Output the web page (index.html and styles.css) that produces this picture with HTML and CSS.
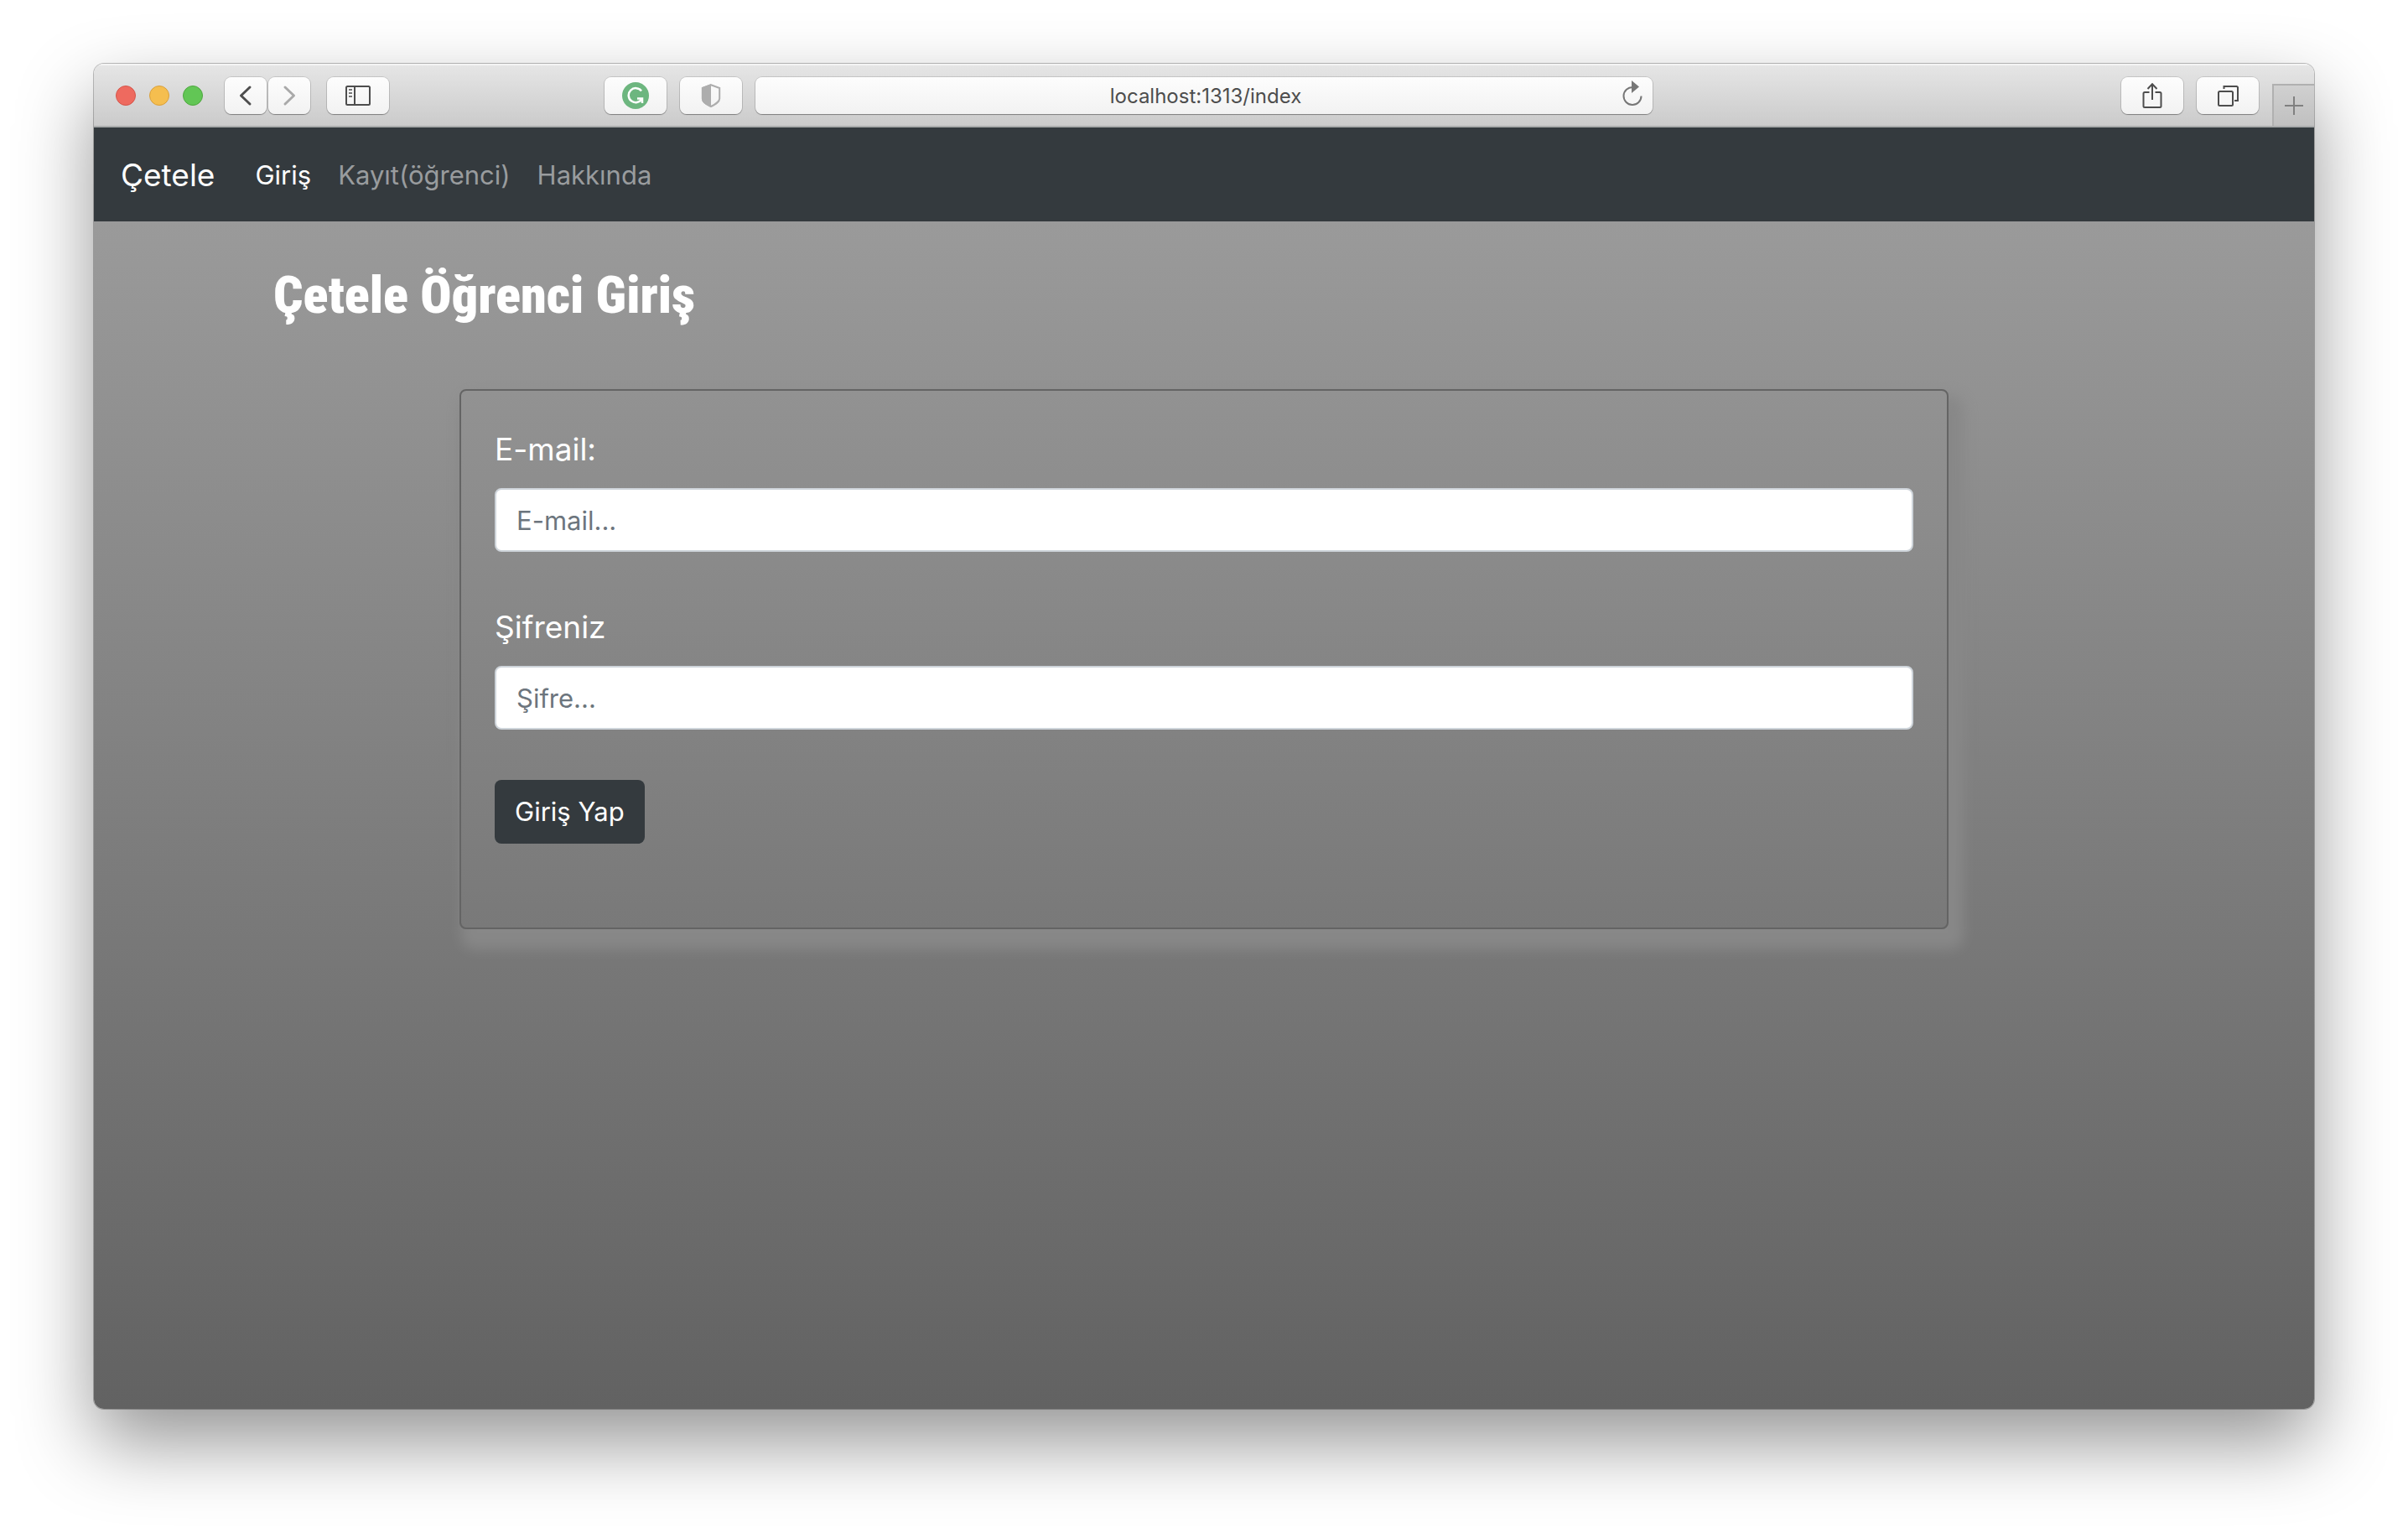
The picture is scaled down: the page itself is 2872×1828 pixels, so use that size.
FILE: index.html
```html
<!DOCTYPE html>
<html lang="tr">
<head>
<meta charset="utf-8">
<meta name="viewport" content="width=device-width, initial-scale=1">
<title>Çetele</title>
<link rel="stylesheet" href="styles.css">
</head>
<body>
<div class="window">
  <header class="toolbar">
    <div class="toolbar-side">
      <div class="lights"><span class="light light-red"></span><span class="light light-yellow"></span><span class="light light-green"></span></div>
      <div class="history">
        <button class="tool tool-small" type="button" aria-label="Geri"><svg width="50" height="44" viewBox="0 0 50 44"><path d="M30 12 19.500 22 30 32" fill="none" stroke="#4d4d4d" stroke-width="3" stroke-linecap="round" stroke-linejoin="round"/></svg></button>
        <button class="tool tool-small" type="button" aria-label="İleri"><svg width="50" height="44" viewBox="0 0 50 44"><path d="M20 12 30.500 22 20 32" fill="none" stroke="#a9a9a9" stroke-width="3" stroke-linecap="round" stroke-linejoin="round"/></svg></button>
      </div>
      <button class="tool" type="button" aria-label="Kenar çubuğu"><svg width="30" height="24" viewBox="0 0 30 24" fill="none" stroke="#4d4d4d" stroke-width="2"><rect x="1" y="1" width="28" height="22" rx="1.500"/><path d="M11 1v22"/><path d="M4 5h4M4 9h4M4 13h4" stroke="#777"/></svg></button>
      <button class="tool push" type="button" aria-label="Grammarly"><svg width="32" height="32" viewBox="0 0 32 32"><circle cx="16" cy="16" r="16" fill="#6db67f"/><path d="M23 10.500A8.500 8.500 0 1 0 23.500 20M18 19.500h6v5.500" fill="none" stroke="#fff" stroke-width="2.500"/></svg></button>
      <button class="tool" type="button" aria-label="Gizlilik"><svg width="24" height="28" viewBox="0 0 24 28"><path d="M12 1.200 22.200 5v12.500c0 4-4.500 6.500-10.200 9.500C6.300 24 1.800 21.500 1.800 17.500V5z" fill="none" stroke="#adadad" stroke-width="2"/><path d="M12 0 1 4.300v13.500C1 22.500 6 25 12 28z" fill="#adadad"/></svg></button>
    </div>
    <div class="address">
      <input class="address-input" type="text" aria-label="Adres" value="localhost:1313/index">
      <button class="reload" type="button" aria-label="Yenile"><svg width="24" height="36" viewBox="0 0 24 36"><path d="M12.500 8A10.500 10.500 0 1 0 22.500 18.500" fill="none" stroke="#777" stroke-width="2"/><path d="M11 0 20 7.500 11 15z" fill="#777"/></svg></button>
    </div>
    <div class="toolbar-side">
      <button class="tool push" type="button" aria-label="Paylaş"><svg width="24" height="32" viewBox="0 0 24 32" fill="none" stroke="#4d4d4d" stroke-width="2"><path d="M8.500 12H3a1.500 1.500 0 0 0-1.500 1.500v15A1.500 1.500 0 0 0 3 30h18a1.500 1.500 0 0 0 1.500-1.500v-15A1.500 1.500 0 0 0 21 12h-5.500M12 21V2M6.500 8 12 2.200 17.500 8"/></svg></button>
      <button class="tool" type="button" aria-label="Sekmeler"><svg width="26" height="26" viewBox="0 0 26 26" fill="none" stroke="#4d4d4d" stroke-width="2"><rect x="2" y="8" width="17" height="17" rx="1.500"/><path d="M8.500 5V2h15a1.500 1.500 0 0 1 1.500 1.500V19h-4"/></svg></button>
      <button class="new-tab" type="button" aria-label="Yeni sekme"><svg width="22" height="22" viewBox="0 0 22 22"><path d="M11 0v22M0 11h22" stroke="#808080" stroke-width="2"/></svg></button>
    </div>
  </header>
  <nav class="navbar">
    <a class="brand" href="#">Çetele</a>
    <a class="nav-link active" href="#">Giriş</a>
    <a class="nav-link" href="#">Kayıt(öğrenci)</a>
    <a class="nav-link" href="#">Hakkında</a>
  </nav>
  <main class="page">
    <div class="container">
      <h1 class="title">Çetele Öğrenci Giriş</h1>
      <form class="card">
        <label class="label" for="email">E-mail:</label>
        <input class="field" id="email" type="email" placeholder="E-mail...">
        <label class="label" for="password">Şifreniz</label>
        <input class="field" id="password" type="password" placeholder="Şifre...">
        <button class="submit" type="button">Giriş Yap</button>
      </form>
    </div>
  </main>
</div>
</body>
</html>
```
FILE: styles.css
```css
* { box-sizing: border-box; }

body {
  margin: 0;
  min-height: 100vh;
  padding: 76px 112px 148px;
  display: flex;
  background: #fff;
  font-family: Inter, "Liberation Sans", sans-serif;
  font-size: 31px;
  line-height: 48px;
}

button, input { font: inherit; margin: 0; }
button { padding: 0; border: 0; }
svg { display: block; }
a { text-decoration: none; }

.window {
  flex: 1;
  min-width: 0;
  display: flex;
  flex-direction: column;
  overflow: hidden;
  border-radius: 12px;
  box-shadow: 0 0 0 1px rgba(0, 0, 0, .25), 0 40px 90px rgba(0, 0, 0, .42);
}

/* Browser toolbar */
.toolbar {
  height: 76px;
  padding-top: 2px;
  display: grid;
  grid-template-columns: 1fr minmax(0, 1070px) 1fr;
  align-items: center;
  background: linear-gradient(#e6e6e6, #cbcbcb);
  border-bottom: 2px solid #a9abac;
  box-shadow: inset 0 2px #f4f4f4;
}
.toolbar-side { height: 72px; display: flex; align-items: center; }
.lights { display: flex; gap: 16px; margin: 0 26px; }
.light { width: 24px; height: 24px; border-radius: 50%; border: 1px solid; }
.light-red { background: #ee6a5f; border-color: #d5554a; }
.light-yellow { background: #f5be4f; border-color: #d9a03c; }
.light-green { background: #62c655; border-color: #4ea73f; }
.history { display: flex; gap: 2px; margin-right: 20px; }

.tool {
  width: 74px;
  height: 44px;
  margin-right: 16px;
  display: grid;
  place-items: center;
  border-radius: 8px;
  background: linear-gradient(#fdfdfd, #f2f2f2);
  box-shadow: 0 0 0 1px rgba(0, 0, 0, .12), 0 1px 1px rgba(0, 0, 0, .3);
}
.tool-small { width: 50px; margin-right: 0; }
.push { margin-left: auto; }

.address { position: relative; display: flex; }
.address-input {
  width: 100%;
  height: 44px;
  padding: 2px 38px 0 42px;
  border: 0;
  border-radius: 8px;
  background: linear-gradient(#fdfdfd, #f2f2f2);
  box-shadow: 0 0 0 1px rgba(0, 0, 0, .12), 0 1px 1px rgba(0, 0, 0, .3);
  color: #4d4d4d;
  font-size: 24px;
  text-align: center;
}
.reload { position: absolute; right: 12px; top: 4px; background: none; }

.new-tab {
  width: 50px;
  height: 50px;
  align-self: flex-end;
  display: grid;
  place-items: center;
  background: linear-gradient(#d0d0d0, #c0c0c0);
  border: solid #b0b0b0;
  border-width: 2px 0 0 2px;
}

/* Site navigation */
.navbar {
  height: 112px;
  padding: 2px 32px 0;
  display: flex;
  align-items: center;
  background: #343a3e;
}
.brand { margin-right: 32px; color: #fff; font-size: 37px; }
.nav-link { padding: 0 16px; color: #999c9e; }
.nav-link.active { color: #fff; }

/* Login page */
.page { flex: 1; background: linear-gradient(#9a9a9a, #626262); }
.container { max-width: 2280px; margin: 0 auto; padding: 40px 30px; }
.title {
  margin: 0 0 64px;
  color: #fff;
  font-family: "Liberation Sans Narrow", "Roboto Condensed", Roboto, sans-serif;
  font-size: 62px;
  font-weight: 900;
  line-height: 96px;
}
.card {
  width: 80%;
  margin: 0 auto;
  padding: 40px;
  display: flex;
  flex-direction: column;
  border: 2px solid #646464;
  border-radius: 8px;
  background: linear-gradient(#929292, #797979);
  box-shadow: 10px 16px 16px 8px #888;
}
.label { margin-bottom: 16px; color: #fff; font-size: 37px; line-height: 60px; }
.field {
  width: 100%;
  height: 76px;
  margin-bottom: 60px;
  padding: 12px 24px;
  border: 2px solid #ced4da;
  border-radius: 8px;
  background: #fff;
  color: #495057;
}
.field::placeholder { color: #6c757d; opacity: 1; }
.submit {
  align-self: flex-start;
  height: 76px;
  margin-bottom: 60px;
  padding: 0 24px;
  border-radius: 8px;
  background: #343a3e;
  color: #fff;
}
```
